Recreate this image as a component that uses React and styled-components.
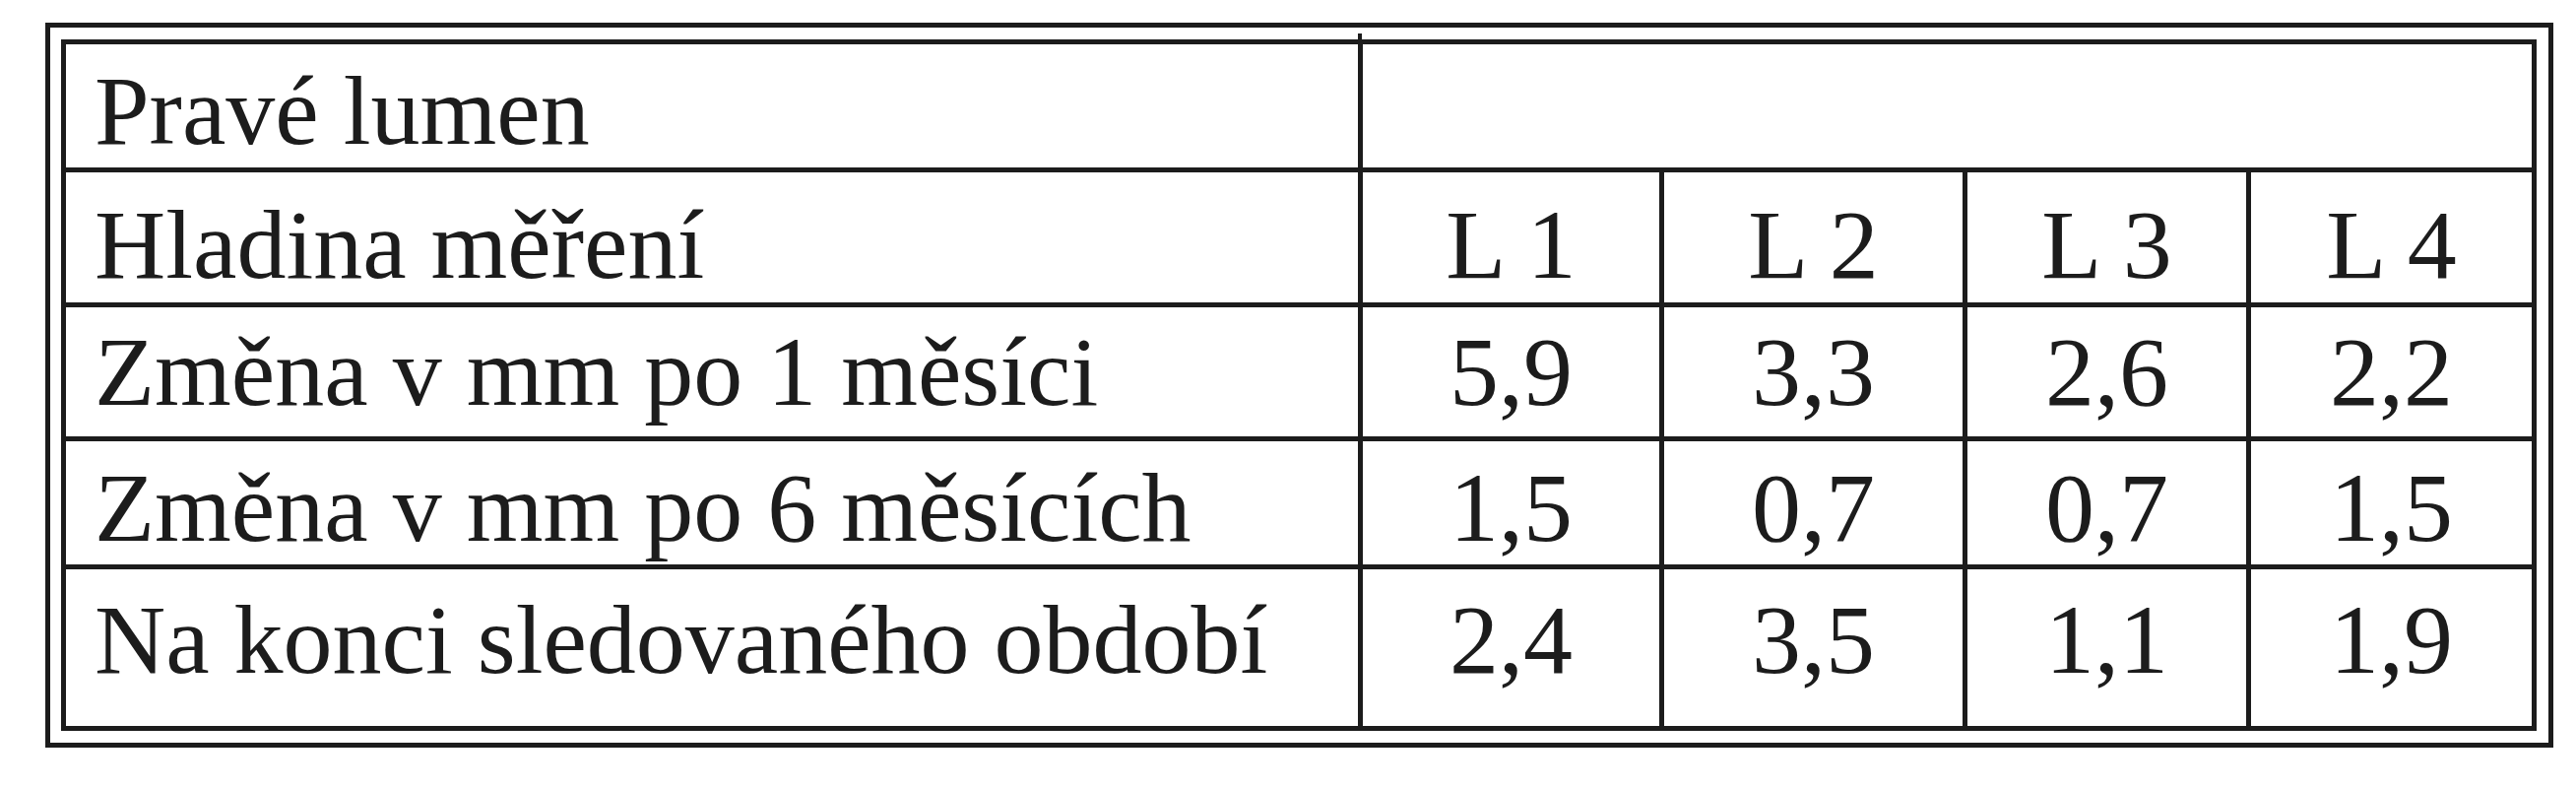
import React from "react";
import styled, { createGlobalStyle } from "styled-components";

const GlobalStyle = createGlobalStyle`
  html, body {
    margin: 0;
    padding: 0;
    background: #ffffff;
  }
  body {
    font-family: "Liberation Serif", "Times New Roman", serif;
    color: #1c1c1c;
  }
`;

const Page = styled.div`
  padding: 23px 0 0 46px;
  width: 2616px;
  height: 800px;
  box-sizing: border-box;
  background: #ffffff;
`;

const OuterFrame = styled.div`
  width: 2547px;
  box-sizing: border-box;
  border: 5px solid #1c1c1c;
  padding: 12px 12px 12px 11px;
`;

const InnerFrame = styled.div`
  border: 5px solid #1c1c1c;
  display: flex;
  flex-direction: column;
`;

const Row = styled.div`
  display: flex;
  box-sizing: border-box;
  height: ${(p) => p.$h}px;
  border-top: ${(p) => (p.$first ? "none" : "5px solid #1c1c1c")};
`;

const Cell = styled.div`
  position: relative;
  box-sizing: border-box;
  width: ${(p) => p.$w}px;
  flex: 0 0 ${(p) => p.$w}px;
  border-left: ${(p) => (p.$first ? "none" : "5px solid #1c1c1c")};
  padding-top: ${(p) => p.$pt}px;
  padding-left: ${(p) => (p.$first ? 29 : 0)}px;
  text-align: ${(p) => (p.$first ? "left" : "center")};
  font-family: "Liberation Serif", "Times New Roman", serif;
  font-size: 100px;
  line-height: 1;
  color: #1c1c1c;
  white-space: nowrap;
`;

const SpanCell = styled(Cell)`
  &::before {
    content: "";
    position: absolute;
    left: -5px;
    top: -11px;
    width: 4px;
    height: 11px;
    background: #1c1c1c;
  }
`;

const COLS = [1312, 306, 308, 288, 290];

const rows = [
  { h: 137, pt: 24, cells: ["Hladina měření", "L 1", "L 2", "L 3", "L 4"] },
  { h: 136, pt: 16, cells: ["Změna v mm po 1 měsíci", "5,9", "3,3", "2,6", "2,2"] },
  { h: 130, pt: 18, cells: ["Změna v mm po 6 měsících", "1,5", "0,7", "0,7", "1,5"] },
  { h: 164, pt: 22, cells: ["Na konci sledovaného období", "2,4", "3,5", "1,1", "1,9"] },
];

export default function App() {
  return (
    <>
      <GlobalStyle />
      <Page>
        <OuterFrame>
          <InnerFrame>
            <Row $h={125} $first>
              <Cell $first $w={COLS[0]} $pt={18}>
                Pravé lumen
              </Cell>
              <SpanCell $w={COLS[1] + COLS[2] + COLS[3] + COLS[4]} $pt={18} />
            </Row>
            {rows.map((r, i) => (
              <Row key={i} $h={r.h}>
                {r.cells.map((c, j) => (
                  <Cell key={j} $first={j === 0} $w={COLS[j]} $pt={r.pt}>
                    {c}
                  </Cell>
                ))}
              </Row>
            ))}
          </InnerFrame>
        </OuterFrame>
      </Page>
    </>
  );
}
